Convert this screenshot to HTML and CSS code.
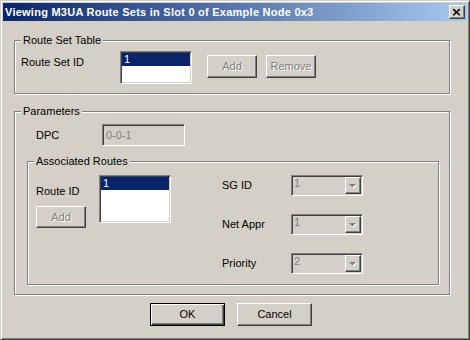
FILE: index.html
```html
<!DOCTYPE html>
<html lang="en">
<head>
  <meta charset="UTF-8" />
  <title>Viewing M3UA Route Sets</title>
  <link rel="stylesheet" href="styles.css">
</head>
<body>

  <div class="window">
    <!-- Title bar -->
    <div class="titlebar">
      <span class="title">Viewing M3UA Route Sets in Slot 0 of Example Node 0x3</span>
      <button class="close" type="button">
        <svg width="16" height="14" viewBox="0 0 16 14">
          <path d="M4.5 4 L11.5 10.5 M11.5 4 L4.5 10.5" stroke="#000" stroke-width="1.7" fill="none" />
        </svg>
      </button>
    </div>

    <div class="dialog-body">
      <!-- Route Set Table -->
      <fieldset class="group group-routeset">
        <legend>Route Set Table</legend>
        <div class="rs-row">
          <span class="label rs-label">Route Set ID</span>
          <div class="listbox rs-list">
            <div class="item selected">1</div>
          </div>
          <button class="btn rs-add" disabled>Add</button>
          <button class="btn rs-remove" disabled>Remove</button>
        </div>
      </fieldset>

      <!-- Parameters -->
      <fieldset class="group group-params">
        <legend>Parameters</legend>
        <div class="dpc-row">
          <span class="label dpc-label">DPC</span>
          <div class="textbox disabled">0-0-1</div>
        </div>

        <fieldset class="group group-routes">
          <legend>Associated Routes</legend>
          <div class="routes-body">
            <div class="route-col">
              <span class="label">Route ID</span>
              <button class="btn route-add" disabled>Add</button>
            </div>
            <div class="listbox route-list">
              <div class="item selected">1</div>
            </div>
            <div class="combo-col">
              <div class="combo-row">
                <span class="label combo-label">SG ID</span>
                <div class="combo">
                  <span class="combo-value">1</span>
                  <span class="combo-btn">
                    <svg width="14" height="15" viewBox="0 0 14 15">
                      <polygon points="4,7 11,7 7.5,10.5" fill="#fff" />
                      <polygon points="3,6 10,6 6.5,9.5" fill="#808080" />
                    </svg>
                  </span>
                </div>
              </div>
              <div class="combo-row">
                <span class="label combo-label">Net Appr</span>
                <div class="combo">
                  <span class="combo-value">1</span>
                  <span class="combo-btn">
                    <svg width="14" height="15" viewBox="0 0 14 15">
                      <polygon points="4,7 11,7 7.5,10.5" fill="#fff" />
                      <polygon points="3,6 10,6 6.5,9.5" fill="#808080" />
                    </svg>
                  </span>
                </div>
              </div>
              <div class="combo-row">
                <span class="label combo-label">Priority</span>
                <div class="combo">
                  <span class="combo-value">2</span>
                  <span class="combo-btn">
                    <svg width="14" height="15" viewBox="0 0 14 15">
                      <polygon points="4,7 11,7 7.5,10.5" fill="#fff" />
                      <polygon points="3,6 10,6 6.5,9.5" fill="#808080" />
                    </svg>
                  </span>
                </div>
              </div>
            </div>
          </div>
        </fieldset>
      </fieldset>

      <!-- Dialog buttons -->
      <div class="actions">
        <button class="btn btn-default" type="button">OK</button>
        <button class="btn" type="button">Cancel</button>
      </div>
    </div>
  </div>

</body>
</html>
```

FILE: styles.css
```css
* { box-sizing: border-box; margin: 0; padding: 0; }

body {
  background: #d4d0c8;
  font-family: "Liberation Sans", Arial, sans-serif;
  font-size: 11px;
  line-height: 13px;
  color: #000;
}

.window {
  width: 470px;
  height: 340px;
  background: #d4d0c8;
  border: 1px solid;
  border-color: #d4d0c8 #404040 #404040 #d4d0c8;
  box-shadow: inset 1px 1px 0 #fff, inset -1px -1px 0 #808080;
  padding: 2px;
}

/* Title bar */
.titlebar {
  height: 18px;
  display: flex;
  align-items: center;
  padding: 0 2px;
  background: linear-gradient(to right, #0a246a, #a6caf0);
  color: #fff;
  font-weight: bold;
}

.title { letter-spacing: 0.25px; }

.close {
  margin-left: auto;
  width: 16px;
  height: 14px;
  display: flex;
  background: #d4d0c8;
  border: 1px solid;
  border-color: #fff #404040 #404040 #fff;
  box-shadow: inset -1px -1px 0 #808080;
}

.close svg { margin: -1px 0 0 -1px; }

.dialog-body {
  padding: 13px 0 0 11px;
}

/* Group boxes */
.group {
  border: 1px solid #808080;
  box-shadow: inset 1px 1px 0 #fff, 1px 1px 0 #fff;
  min-width: 0;
}

.group legend {
  margin-left: 6px;
  padding: 0 2px;
  background: #d4d0c8;
  line-height: 13px;
}

.group-routeset { width: 436px; }

.rs-row {
  display: flex;
  align-items: flex-start;
  padding: 4px 0 9px 6px;
}

.rs-label {
  width: 99px;
  margin-top: 5px;
}

.rs-list { width: 72px; height: 33px; }

.rs-row .btn { margin-top: 4px; width: 50px; height: 23px; }
.rs-add { margin-left: 15px; }
.rs-remove { margin-left: 9px; }

.group-params {
  width: 436px;
  margin-top: 11px;
  padding-bottom: 9px;
}

.dpc-row {
  display: flex;
  align-items: center;
  padding: 6px 0 0 21px;
}

.dpc-label { width: 66px; }

.group-routes {
  width: 412px;
  margin: 9px 0 0 12px;
}

.routes-body {
  display: flex;
  align-items: flex-start;
  padding: 0 0 10px 8px;
}

.route-col {
  width: 63px;
  display: flex;
  flex-direction: column;
  align-items: flex-start;
  padding-top: 17px;
}

.route-add { margin-top: 8px; width: 50px; height: 22px; }

.route-list { width: 72px; height: 48px; margin-top: 7px; }

.combo-col {
  margin-left: 51px;
  padding-top: 7px;
  display: flex;
  flex-direction: column;
  gap: 18px;
}

.combo-row {
  display: flex;
  align-items: center;
  height: 21px;
}

.combo-label { width: 69px; }

/* Sunken controls */
.listbox,
.textbox,
.combo {
  border: 1px solid;
  border-color: #808080 #fff #fff #808080;
  box-shadow: inset 1px 1px 0 #404040, inset -1px -1px 0 #d4d0c8;
  padding: 1px;
}

.listbox { background: #fff; }

.item {
  height: 13px;
  line-height: 13px;
  padding-left: 2px;
}

.item.selected {
  background: #0a246a;
  color: #fff;
}

.textbox {
  width: 83px;
  height: 22px;
  display: flex;
  align-items: center;
  padding-left: 3px;
}

.textbox.disabled {
  background: #d4d0c8;
  color: #808080;
}

.combo {
  width: 72px;
  height: 21px;
  display: flex;
  background: #d4d0c8;
}

.combo-value {
  flex: 1;
  color: #808080;
  line-height: 12px;
  padding-left: 1px;
}

.combo-btn {
  width: 16px;
  height: 17px;
  display: flex;
  background: #d4d0c8;
  border: 1px solid;
  border-color: #fff #404040 #404040 #fff;
  box-shadow: inset -1px -1px 0 #808080;
}

/* Push buttons */
.btn {
  font: inherit;
  color: #000;
  background: #d4d0c8;
  border: 1px solid;
  border-color: #fff #404040 #404040 #fff;
  box-shadow: inset -1px -1px 0 #808080;
  display: flex;
  align-items: center;
  justify-content: center;
}

.btn:disabled {
  color: #808080;
  text-shadow: 1px 1px 0 #fff;
}

.actions {
  display: flex;
  gap: 12px;
  margin-top: 8px;
  padding-left: 136px;
}

.actions .btn { width: 75px; height: 23px; }

.btn-default {
  border: 1px solid #000;
  box-shadow: inset 1px 1px 0 #fff, inset -1px -1px 0 #404040, inset -2px -2px 0 #808080;
}
```
